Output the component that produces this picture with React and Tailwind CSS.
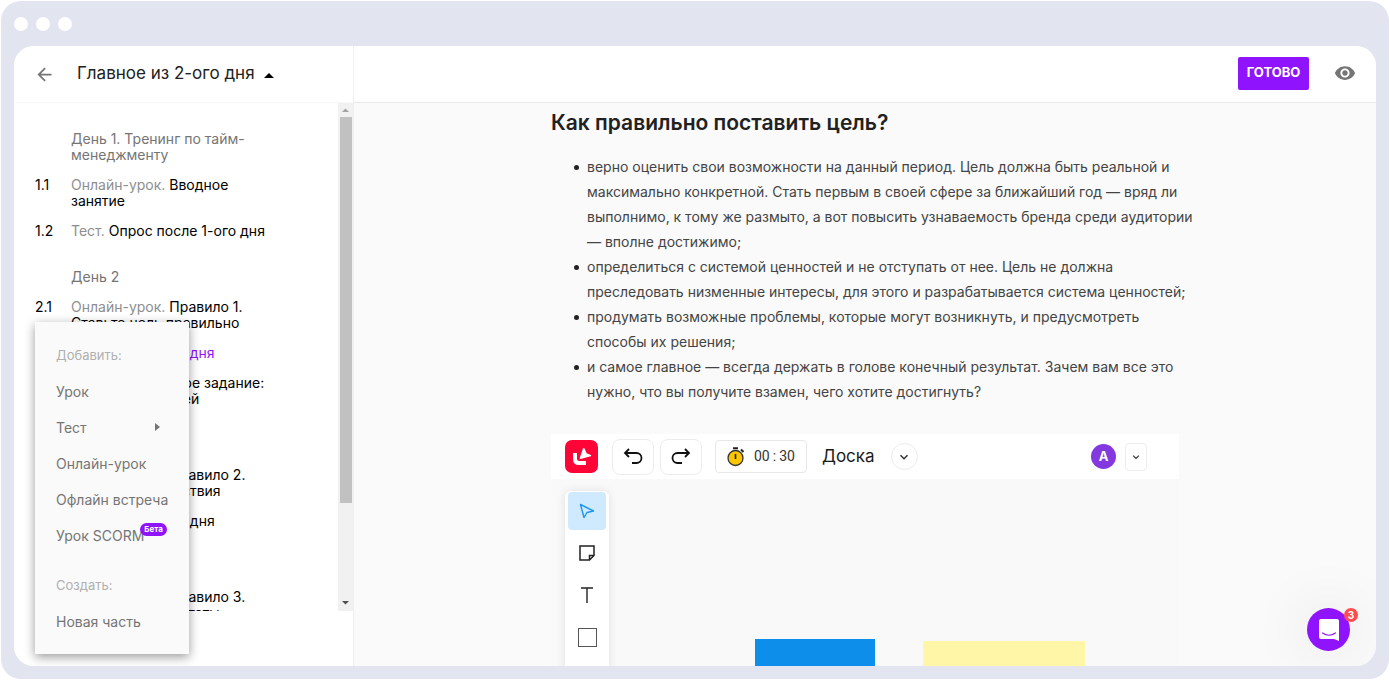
import React from "react";
import { MdArrowBack, MdRemoveRedEye, MdArrowDropUp } from "react-icons/md";

const sections = [
  {
    title: "День 1. Тренинг по тайм-менеджменту",
    items: [
      { num: "1.1", type: "Онлайн-урок.", name: "Вводное занятие" },
      { num: "1.2", type: "Тест.", name: "Опрос после 1-ого дня" },
    ],
  },
  {
    title: "День 2",
    items: [
      { num: "2.1", type: "Онлайн-урок.", name: "Правило 1. Ставьте цель правильно" },
      { num: "2.2", type: "Тест.", name: "Опрос 2-го дня", active: true },
      { num: "2.3", type: "Задание.", name: "Тестовое задание: составь план дней" },
    ],
  },
  {
    title: "День 3",
    items: [
      { num: "3.1", type: "Онлайн-урок.", name: "Правило 2. Планируйте действия" },
      { num: "3.2", type: "Тест.", name: "Опрос 3-го дня" },
    ],
  },
  {
    title: "День 4",
    items: [
      { num: "4.1", type: "Онлайн-урок.", name: "Правило 3. Расставь приоритеты" },
    ],
  },
];

const points = [
  "верно оценить свои возможности на данный период. Цель должна быть реальной и максимально конкретной. Стать первым в своей сфере за ближайший год — вряд ли выполнимо, к тому же размыто, а вот повысить узнаваемость бренда среди аудитории — вполне достижимо;",
  "определиться с системой ценностей и не отступать от нее. Цель не должна преследовать низменные интересы, для этого и разрабатывается система ценностей;",
  "продумать возможные проблемы, которые могут возникнуть, и предусмотреть способы их решения;",
  "и самое главное — всегда держать в голове конечный результат. Зачем вам все это нужно, что вы получите взамен, чего хотите достигнуть?",
];

const Chevron = ({ size }) => (
  <svg width={size} height={size} viewBox="0 0 10 10" fill="none" stroke="#333" strokeWidth="1.5">
    <path d="M1.5 3.2 5 6.7 8.5 3.2" />
  </svg>
);

const UndoIcon = ({ className }) => (
  <svg className={className} width="20" height="18" viewBox="0 0 20 18" fill="none" stroke="#111" strokeWidth="1.8">
    <path d="M6 1 2 5l4 4M2 5h11.5a5 5 0 0 1 0 10H9" />
  </svg>
);

const LogoIcon = () => (
  <svg width="33" height="33" viewBox="0 0 33 33">
    <rect width="33" height="33" rx="7" fill="#ff0436" />
    <path d="M8 13h4v5.500q0 2.500 2.500 2.500h6.500v4h-7q-6 0-6-6z" fill="#fff" />
    <path d="M18 8.200q1-.8 1.600.4l2 4.600 4.200 1.800q1 .8 0 1.300L15.500 19q-1 0-.8-1z" fill="#fff" />
  </svg>
);

const TimerIcon = () => (
  <svg width="18" height="20" viewBox="0 0 18 20">
    <path d="M6 1.200h5M14 2.500l2.500 2.500" stroke="#222" strokeWidth="2" />
    <circle cx="8.500" cy="11" r="7.500" fill="#fdc500" stroke="#333" strokeWidth="1.300" />
    <path d="M8.500 7v5" stroke="#222" strokeWidth="1.600" />
  </svg>
);

const Header = () => (
  <header className="flex h-[57px] flex-none items-center justify-end gap-[25px] border-b border-[#e8e8e8] bg-white pr-5 pb-0.5">
    <button className="h-[33px] w-[71px] rounded-xs bg-[#9013fe] text-[13px] font-bold text-white">ГОТОВО</button>
    <button aria-label="Просмотр">
      <MdRemoveRedEye size={22} color="#757575" />
    </button>
  </header>
);

const Sidebar = () => (
  <aside className="flex w-[340px] flex-none flex-col border-r border-[#efefef] bg-white pb-[55px]">
    <div className="flex h-[57px] flex-none items-center border-b border-[#f8f8f8] pl-5">
      <button aria-label="Назад" className="mr-[22px]">
        <MdArrowBack size={21} color="#757575" />
      </button>
      <h1 className="text-[17px] text-[#212121]">Главное из 2-ого дня</h1>
      <button aria-label="Свернуть" className="ml-0.5 pt-1">
        <MdArrowDropUp size={24} color="#000" />
      </button>
    </div>

    <div className="flex min-h-0 flex-1">
      <nav className="flex-1 overflow-hidden pt-[5px] pl-[21px]">
        {sections.map((section) => (
          <section key={section.title} className="pt-4">
            <h2 className="w-[240px] py-[7px] pl-9 text-[14px] leading-4 text-[#757575]">{section.title}</h2>
            {section.items.map((item) => (
              <a key={item.num} href="#" className="flex py-[7px] text-[14px] leading-4 text-black">
                <span className="w-9 flex-none">{item.num}</span>
                <span className={item.active ? "w-[200px] text-[#9013fe]" : "w-[200px]"}>
                  <span className="text-[#8e8e8e]">{item.type}</span> {item.name}
                </span>
              </a>
            ))}
          </section>
        ))}
      </nav>

      <div className="flex w-[15px] flex-none flex-col items-center bg-[#f1f1f1]">
        <svg width="15" height="14" viewBox="0 0 15 14"><path d="M4 9h7L7.500 5.500z" fill="#a3a3a3" /></svg>
        <div className="h-[76%] w-3 bg-[#c1c1c1]" />
        <svg className="mt-auto" width="15" height="16" viewBox="0 0 15 16"><path d="M4 6h7L7.500 9.500z" fill="#505050" /></svg>
      </div>
    </div>
  </aside>
);

const AddMenu = () => (
  <div className="absolute bottom-3 left-[21px] flex w-[154px] flex-col items-start bg-[#fafafa] py-[15px] pl-[21px] text-[14px] text-[#757575] shadow-[0_3px_10px_rgba(0,0,0,0.4)]">
    <span className="h-9 text-[13px] leading-9 text-[#b0b0b0]">Добавить:</span>
    <button className="h-9">Урок</button>
    <button className="flex h-9 w-[105px] items-center justify-between">
      Тест
      <svg width="7" height="8" viewBox="0 0 7 8"><path d="M1 0v8l5-4z" fill="#757575" /></svg>
    </button>
    <button className="h-9">Онлайн-урок</button>
    <button className="h-9">Офлайн встреча</button>
    <button className="relative h-9">
      Урок SCORM
      <span className="absolute top-1.5 left-[84px] h-[13px] w-[27px] rounded-full bg-[#9013fe] text-center text-[8px] leading-[13px] font-bold text-white">Бета</span>
    </button>
    <span className="mt-[14px] h-9 text-[13px] leading-9 text-[#b0b0b0]">Создать:</span>
    <button className="h-9">Новая часть</button>
  </div>
);

const Board = () => (
  <div className="mt-[30px] flex flex-1 flex-col bg-[#f9f9f9]">
    <div className="flex h-[45px] flex-none items-center bg-white pr-8 pl-[14px]">
      <LogoIcon />
      <button aria-label="Отменить" className="ml-[14px] flex h-9 w-[42px] items-center justify-center rounded-lg border border-[#ececec]">
        <UndoIcon />
      </button>
      <button aria-label="Повторить" className="ml-1.5 flex h-9 w-[42px] items-center justify-center rounded-lg border border-[#ececec]">
        <UndoIcon className="-scale-x-100" />
      </button>
      <div className="ml-[13px] flex h-[33px] w-[92px] items-center gap-[9px] rounded border border-[#e8e8e8] pl-[11px]">
        <TimerIcon />
        <span className="flex gap-[3px] font-['Roboto'] text-[14px] text-[#333]">
          <span>00</span>
          <span>:</span>
          <span>30</span>
        </span>
      </div>
      <span className="ml-[15px] text-[17px] text-[#1a1a1a]">Доска</span>
      <button aria-label="Меню доски" className="ml-4 flex size-[27px] items-center justify-center rounded-full border border-[#ececec]">
        <Chevron size={10} />
      </button>
      <span className="ml-auto flex size-[25px] items-center justify-center rounded-full bg-[#8338e0] text-[13px] font-bold text-white">А</span>
      <button aria-label="Участники" className="ml-[9px] flex h-7 w-[22px] items-center justify-center rounded border border-[#ececec]">
        <Chevron size={8} />
      </button>
    </div>

    <div className="relative flex-1">
      <div className="absolute top-3 left-[14px] flex h-[240px] w-11 flex-col items-center gap-1 rounded-md bg-white pt-px shadow-[0_0_10px_rgba(0,0,0,0.1)]">
        <button aria-label="Курсор" className="flex h-[38px] w-[38px] items-center justify-center rounded-sm bg-[#cfeaff]">
          <svg width="16" height="16" viewBox="0 0 16 16" fill="none" stroke="#1b95f2" strokeWidth="1.400" strokeLinejoin="round">
            <path d="M1.500 1.500 14.500 8 8 9.500 5 14.500z" />
          </svg>
        </button>
        <button aria-label="Стикер" className="flex h-[38px] w-[38px] items-center justify-center">
          <svg width="16" height="16" viewBox="0 0 16 16" fill="none" stroke="#222" strokeWidth="1.500">
            <path d="M1 1h14v9.500L10.500 15H1zM10.500 15v-4.500H15" />
          </svg>
        </button>
        <button aria-label="Текст" className="flex h-[38px] w-[38px] items-center justify-center">
          <svg width="14" height="16" viewBox="0 0 14 16" fill="none" stroke="#222" strokeWidth="1.400">
            <path d="M1 1h12M7 1v15" />
          </svg>
        </button>
        <button aria-label="Фигура" className="flex h-[38px] w-[38px] items-center justify-center">
          <span className="size-[19px] border border-[#555]" />
        </button>
      </div>
      <div className="absolute top-[160px] left-[204px] h-[120px] w-[120px] bg-[#0d8eeb]" />
      <div className="absolute top-[162px] left-[372px] h-[120px] w-[162px] bg-[#fff6a8]" />
    </div>
  </div>
);

const App = () => {
  return (
    <div className="h-screen bg-white p-px font-['Inter',sans-serif]">
      <div className="flex h-full flex-col rounded-[20px] bg-[#e2e4f0] px-[13px] pb-[13px]">
        <div className="flex h-[45px] flex-none items-center gap-2">
          <span className="size-[14px] rounded-full bg-white" />
          <span className="size-[14px] rounded-full bg-white" />
          <span className="size-[14px] rounded-full bg-white" />
        </div>

        <div className="relative flex min-h-0 flex-1 overflow-hidden rounded-[20px] bg-[#fafafa]">
          <Sidebar />
          <div className="flex min-h-0 min-w-0 flex-1 flex-col">
            <Header />
            <main className="mx-auto flex min-h-0 w-full max-w-[628px] flex-1 flex-col pt-1.5">
              <h2 className="text-[21px] leading-7 font-semibold text-[#212121]">Как правильно поставить цель?</h2>
              <ul className="mt-[17px] -mr-4 pl-9 text-[14px] leading-[25px] text-[#444]">
                {points.map((point) => (
                  <li key={point} className="relative before:absolute before:top-[11px] before:-left-[13px] before:size-[5px] before:rounded-full before:bg-[#222]">
                    {point}
                  </li>
                ))}
              </ul>
              <Board />
            </main>
          </div>

          <AddMenu />

          <button aria-label="Чат" className="absolute right-[26px] bottom-[15px] flex size-[43px] items-center justify-center rounded-full bg-[#9013fe] shadow-[0_0_60px_rgba(0,0,0,0.12)]">
            <svg width="20" height="22" viewBox="0 0 20 22">
              <path d="M2 0h16a2 2 0 0 1 2 2v20l-5-2H2a2 2 0 0 1-2-2V2a2 2 0 0 1 2-2z" fill="#fff" />
              <path d="M3.500 14q6.500 4.500 13 0" fill="none" stroke="#9013fe" strokeWidth="1.200" strokeLinecap="round" />
            </svg>
            <span className="absolute top-0 -right-2 size-[14px] rounded-full bg-[#ff4d4f] text-[10px] leading-[14px] font-bold text-white">3</span>
          </button>
        </div>
      </div>
    </div>
  );
};

export default App;
